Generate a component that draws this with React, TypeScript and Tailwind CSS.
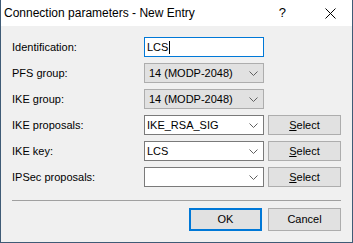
import React from "react";

const Chevron = () => (
  <svg width="9" height="5" viewBox="0 0 9 5" className="shrink-0">
    <path d="M0.5 0.5 L4.5 4.5 L8.5 0.5" fill="none" stroke="#606060" strokeWidth="1" />
  </svg>
);

const Label = ({ children }: { children: React.ReactNode }) => (
  <div className="w-[132px] h-[20px] flex items-center text-[11px] text-black">{children}</div>
);

const DropList = ({ value }: { value: string }) => (
  <div className="w-[120px] h-[20px] flex items-center justify-between bg-[#e1e1e1] border border-[#adadad] pl-[4px] pr-[5px] text-[11px] text-black">
    <span>{value}</span>
    <Chevron />
  </div>
);

const EditCombo = ({ value }: { value: string }) => (
  <div className="w-[120px] h-[20px] flex items-center justify-between bg-white border border-[#7a7a7a] pl-[2px] pr-[5px] text-[11px] text-black">
    <span>{value}</span>
    <Chevron />
  </div>
);

const SelectBtn = () => (
  <div className="ml-[4px] w-[73px] h-[20px] flex items-center justify-center bg-[#e1e1e1] border border-[#adadad] text-[11px] text-black">
    <span>
      <span className="underline">S</span>elect
    </span>
  </div>
);

export default function App() {
  return (
    <div
      className="w-[353px] h-[243px] flex flex-col border-x border-b border-[#3f5b76] bg-[#f0f0f0]"
      style={{ fontFamily: '"Liberation Sans", Arial, sans-serif' }}
    >
      <div className="h-[26px] bg-white flex items-center shrink-0">
        <span className="pl-[3px] text-[12px] text-black">Connection parameters - New Entry</span>
        <span className="ml-auto text-[13px] text-black mr-[39px]">?</span>
        <svg width="11" height="11" viewBox="0 0 11 11" className="mr-[16px]">
          <path d="M0.5 0.5 L10.5 10.5 M10.5 0.5 L0.5 10.5" stroke="#000" strokeWidth="1" />
        </svg>
      </div>
      <div className="flex-1 flex flex-col pl-[11px] pr-[10px] pt-[11px]">
        <div className="flex flex-col gap-[6px]">
          <div className="flex items-center">
            <Label>Identification:</Label>
            <div className="w-[120px] h-[20px] flex items-center bg-white border border-[#0078d7] pl-[2px] text-[11px] text-black">
              <span>LCS</span>
              <span className="ml-[1px] w-px h-[13px] bg-black" />
            </div>
          </div>
          <div className="flex items-center">
            <Label>PFS group:</Label>
            <DropList value="14 (MODP-2048)" />
          </div>
          <div className="flex items-center">
            <Label>IKE group:</Label>
            <DropList value="14 (MODP-2048)" />
          </div>
          <div className="flex items-center">
            <Label>IKE proposals:</Label>
            <EditCombo value="IKE_RSA_SIG" />
            <SelectBtn />
          </div>
          <div className="flex items-center">
            <Label>IKE key:</Label>
            <EditCombo value="LCS" />
            <SelectBtn />
          </div>
          <div className="flex items-center">
            <Label>IPSec proposals:</Label>
            <EditCombo value="" />
            <SelectBtn />
          </div>
        </div>
        <div className="mt-[13px] h-px bg-[#a0a0a0] w-[329px]" />
        <div className="mt-[7px] flex justify-end gap-[6px] pr-[1px]">
          <div className="w-[73px] h-[23px] flex items-center justify-center bg-[#e1e1e1] border-2 border-[#0078d7] text-[11px] text-black">
            OK
          </div>
          <div className="w-[73px] h-[23px] flex items-center justify-center bg-[#e1e1e1] border border-[#adadad] text-[11px] text-black">
            Cancel
          </div>
        </div>
      </div>
    </div>
  );
}
